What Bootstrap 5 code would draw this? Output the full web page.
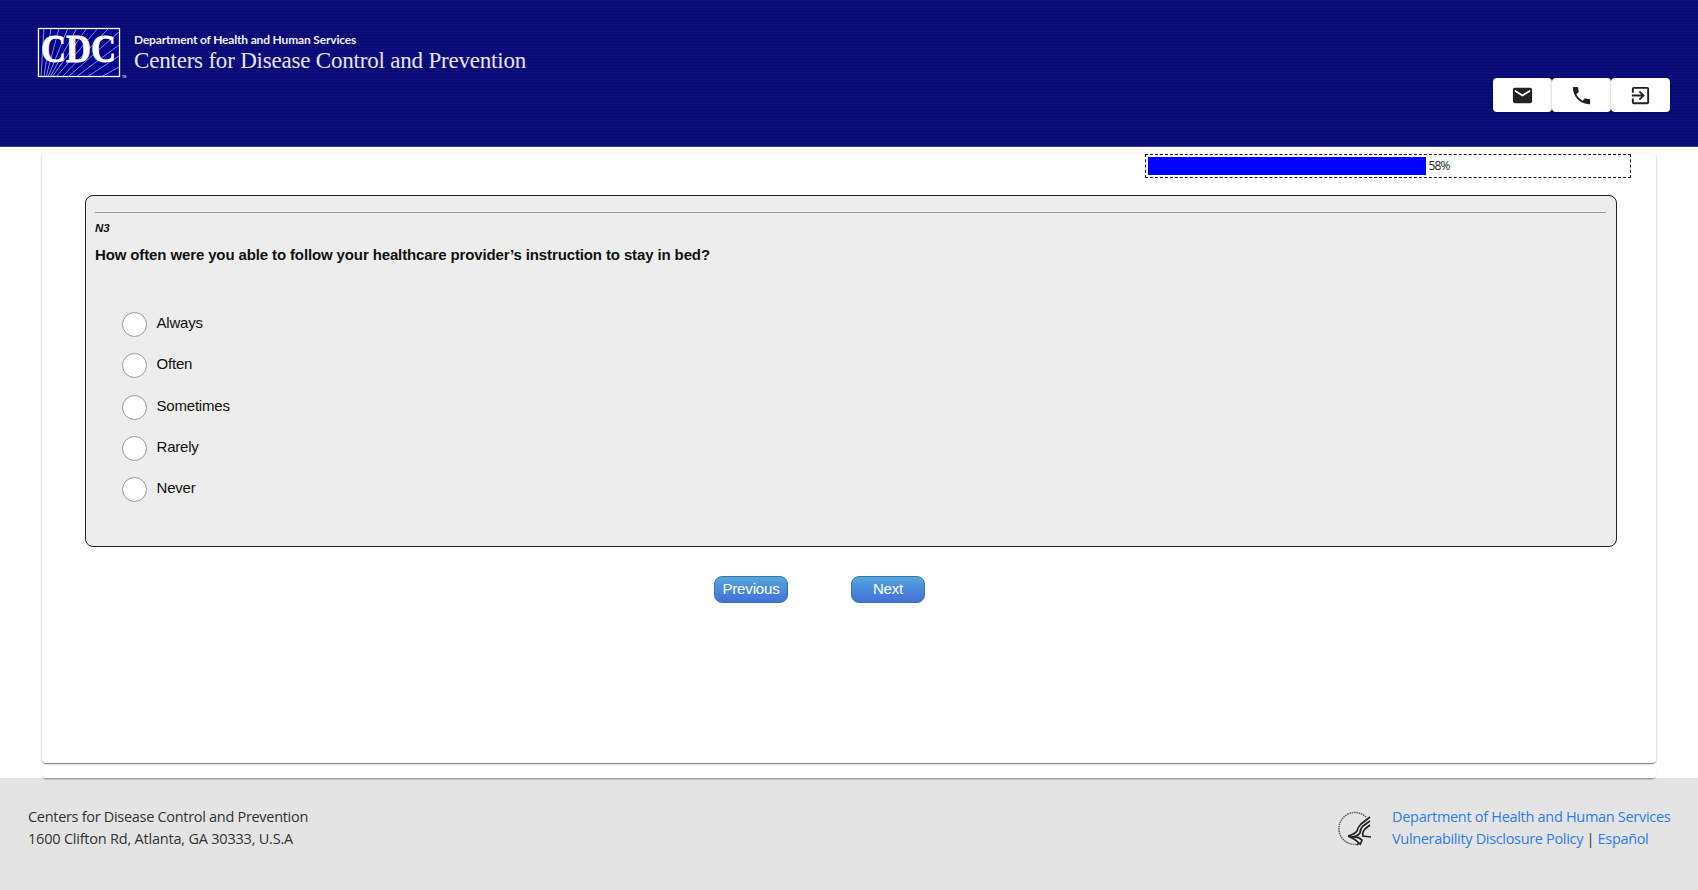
<!DOCTYPE html>
<html lang="en">
<head>
  <meta charset="UTF-8">
  <meta name="viewport" content="width=device-width, initial-scale=1.0">
  <title>Survey</title>
  <link href="https://cdn.jsdelivr.net/npm/bootstrap@5.3.0/dist/css/bootstrap.min.css" rel="stylesheet">
  <style>
    body { font-family: "Open Sans", "Noto Sans", sans-serif; }
    .site-header {
      height: 147px;
      padding: 27px 28px 0 37px;
      background: repeating-linear-gradient(#0d0d7f 0 2px, #09096c 2px 3px);
      border-bottom: 1px solid #3d3d80;
    }
    .brand-name { margin: 5px 0 0 6px; color: #f0f0fa; white-space: nowrap; }
    .brand-dept { font: bold 12px/16px Lato, sans-serif; letter-spacing: -.17px; }
    .brand-title { margin-top: 1px; font: 23px/24px "Liberation Serif", serif; letter-spacing: -.2px; color: #e4e4f6; }
    .tool-group { margin-top: 51px; }
    .tool-btn {
      width: 59px;
      height: 34px;
      padding: 0;
      border: 0;
      border-radius: 4px;
      background: #fff;
      box-shadow: 0 1px 3px rgba(0,0,0,.3);
    }
    .sheet-wrap {
      height: 631px;
      margin: 0 42px;
      padding-top: 7px;
      border-radius: 4px;
      box-shadow: 0 2px 2px -1px rgba(0,0,0,.45);
    }
    .sheet {
      height: 609px;
      border-radius: 4px;
      background: #fff;
      box-shadow: 0 2px 1px -1px rgba(0,0,0,.3), 0 1px 1px rgba(0,0,0,.14), 0 1px 3px rgba(0,0,0,.2);
    }
    .meter {
      width: 486px;
      height: 24px;
      margin-right: 25px;
      padding: 2px;
      border: 1px dashed #111;
      font-size: 12px;
      letter-spacing: -.8px;
    }
    .meter-fill { height: 18px; margin-right: 2px; background: #00f; }
    .question-box {
      height: 352px;
      margin: 17px 39px 0 43px;
      padding: 16px 10px 0 9px;
      border: 1px solid #222;
      border-radius: 8px;
      background: #ededed;
      font-family: "Liberation Sans", Arial, sans-serif;
      color: #111;
    }
    .question-box hr { margin: 0; border-top: 1px solid #999; opacity: 1; }
    .question-id { margin: 9px 0 0; font: italic bold 11.5px/13px "Liberation Sans", Arial, sans-serif; }
    .question-text { margin: 10px 0 0; font-size: 15px; line-height: 20px; letter-spacing: -.125px; }
    .choices { margin: 47px 0 0 27px; }
    .choice { height: 41.3px; font-size: 15px; letter-spacing: -.2px; }
    .choice .dot {
      width: 25px;
      height: 25px;
      margin: 0 9.5px 0 0;
      border: 1px solid #999;
      background-color: #fff;
    }
    .nav-row { margin: 29px 0 0 672px; gap: 63px; }
    .btn-step {
      width: 74px;
      height: 27px;
      padding: 0 0 2px;
      border: 1px solid #3478ad;
      border-radius: 8px;
      background: linear-gradient(#54a6dc, #4470d8);
      color: #fff;
      font: 15px/23px "Liberation Sans", Arial, sans-serif;
      letter-spacing: -.15px;
    }
    .site-footer {
      height: 112px;
      padding: 28px 28px 0;
      background: #e4e4e4;
      font-size: 14.5px;
      line-height: 22.3px;
      letter-spacing: -.3px;
      color: #333;
    }
    .site-footer a { color: #2b7de9; text-decoration: none; }
    .street { letter-spacing: -.21px; }
    .footer-links { width: 278px; white-space: nowrap; }
    .policy { letter-spacing: -.33px; }
    .hhs-seal { margin: 5px 19px 0 0; }
  </style>
</head>
<body>
<header class="site-header d-flex justify-content-between">
  <div class="d-flex align-items-start">
    <svg width="91" height="52" viewBox="0 0 91 52">
      <defs><clipPath id="logoBox"><rect x="1.5" y="1.5" width="81" height="48"/></clipPath></defs>
      <rect x="1.5" y="1.5" width="81" height="48" fill="#00008f" stroke="#fff" stroke-width="1.3"/>
      <g stroke="#9c9ce0" stroke-width=".9" clip-path="url(#logoBox)">
        <path d="M4 50L7 1M7 50L14 1M9 50L22 1M11 50L31 1M13 50L40 1M15 50L50 1M19 50L61 1M25 50L72 1M31 50L82 5M39 50L82 18M50 50L82 29M64 50L82 40"/>
      </g>
      <text x="4" y="34.500" textLength="75" lengthAdjust="spacingAndGlyphs" font-family="Liberation Serif, serif" font-weight="bold" font-size="40" fill="#fff" stroke="#fff" stroke-width=".8">CDC</text>
      <text x="85" y="51" font-family="Liberation Sans, sans-serif" font-size="3" fill="#fff">TM</text>
    </svg>
    <div class="brand-name">
      <div class="brand-dept">Department of Health and Human Services</div>
      <div class="brand-title">Centers for Disease Control and Prevention</div>
    </div>
  </div>
  <div class="tool-group d-flex align-items-start">
    <button class="btn tool-btn d-flex align-items-center justify-content-center" aria-label="Email">
      <svg width="23" height="23" viewBox="0 0 24 24" fill="#222"><path d="M20 4H4c-1.1 0-2 .9-2 2v12c0 1.1.9 2 2 2h16c1.1 0 2-.9 2-2V6c0-1.1-.9-2-2-2zm0 4l-8 5-8-5V6l8 5 8-5v2z"/></svg>
    </button>
    <button class="btn tool-btn d-flex align-items-center justify-content-center" aria-label="Phone">
      <svg width="23" height="23" viewBox="0 0 24 24" fill="#222"><path d="M6.6 10.8c1.4 2.8 3.8 5.1 6.6 6.6l2.2-2.2c.3-.3.7-.4 1-.2 1.1.4 2.3.6 3.6.6.6 0 1 .4 1 1V20c0 .6-.4 1-1 1C10.6 21 3 13.4 3 4c0-.6.5-1 1-1h3.5c.6 0 1 .4 1 1 0 1.2.2 2.4.6 3.6.1.3 0 .7-.2 1z"/></svg>
    </button>
    <button class="btn tool-btn d-flex align-items-center justify-content-center" aria-label="Exit">
      <svg width="23" height="23" viewBox="0 0 24 24" fill="#222"><path d="M10.1 15.6L11.5 17l5-5-5-5-1.4 1.4L12.7 11H3v2h9.7zM19 3H5c-1.1 0-2 .9-2 2v4h2V5h14v14H5v-4H3v4c0 1.1.9 2 2 2h14c1.1 0 2-.9 2-2V5c0-1.1-.9-2-2-2z"/></svg>
    </button>
  </div>
</header>

<main class="sheet-wrap position-relative">
  <div class="sheet">
    <div class="meter d-flex align-items-center ms-auto">
      <div class="meter-fill" style="width: 58%"></div>58%
    </div>
    <div class="question-box">
      <hr>
      <p class="question-id">N3</p>
      <p class="question-text fw-bold">How often were you able to follow your healthcare provider’s instruction to stay in bed?</p>
      <div class="choices">
        <label class="choice d-flex align-items-start"><input class="form-check-input dot" type="radio" name="n3"><span>Always</span></label>
        <label class="choice d-flex align-items-start"><input class="form-check-input dot" type="radio" name="n3"><span>Often</span></label>
        <label class="choice d-flex align-items-start"><input class="form-check-input dot" type="radio" name="n3"><span>Sometimes</span></label>
        <label class="choice d-flex align-items-start"><input class="form-check-input dot" type="radio" name="n3"><span>Rarely</span></label>
        <label class="choice d-flex align-items-start"><input class="form-check-input dot" type="radio" name="n3"><span>Never</span></label>
      </div>
    </div>
    <div class="nav-row d-flex">
      <button class="btn btn-step">Previous</button>
      <button class="btn btn-step">Next</button>
    </div>
  </div>
</main>

<footer class="site-footer d-flex justify-content-between">
  <div>
    <div>Centers for Disease Control and Prevention</div>
    <div class="street">1600 Clifton Rd, Atlanta, GA 30333, U.S.A</div>
  </div>
  <div class="d-flex align-items-start">
    <svg class="hhs-seal" width="36" height="36" viewBox="0 0 36 36" fill="none" stroke="#222">
      <path d="M29 6A16 16 0 1 0 22 33" stroke="#666" stroke-width="1.5" stroke-dasharray="1.6 .7"/>
      <path d="M33 6L24 13Q21 16 20 20Q18 23 11 25M33 10L26 15Q23 18 23 22Q20 26 13 26M33 14L28 18Q25 21 26 25" stroke-width="1.7"/>
      <path d="M11 25Q18 28 22 32L20 34M15 26Q21 25 25 29L23 34M25 25L34 26" stroke-width="1.7"/>
    </svg>
    <div class="footer-links">
      <div><a href="#">Department of Health and Human Services</a></div>
      <div class="policy"><a href="#">Vulnerability Disclosure Policy</a> | <a href="#">Español</a></div>
    </div>
  </div>
</footer>

<script src="https://cdn.jsdelivr.net/npm/bootstrap@5.3.0/dist/js/bootstrap.bundle.min.js"></script>
</body>
</html>
